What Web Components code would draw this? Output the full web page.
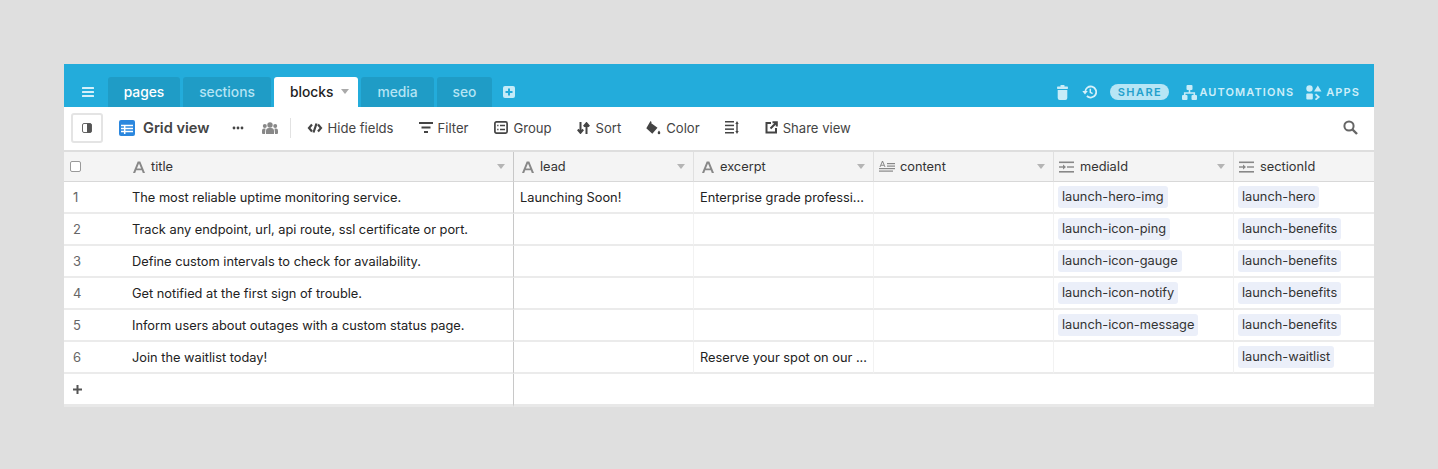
<!DOCTYPE html>
<html>
<head>
<meta charset="utf-8">
<title>blocks</title>
<style>
  html, body { margin: 0; height: 469px; overflow: hidden; background: #dfdfdf; }
  body { padding: 64px 64px 0; box-sizing: border-box; font-family: Inter, "Liberation Sans", sans-serif; color: #222; }
</style>
</head>
<body>
<base-app>
  <top-bar slot="top">
    <table-tab style="width:72px">pages</table-tab>
    <table-tab dim style="width:88px">sections</table-tab>
    <table-tab active style="width:84px">blocks</table-tab>
    <table-tab dim style="width:73px">media</table-tab>
    <table-tab dim style="width:55px">seo</table-tab>
  </top-bar>
  <view-bar slot="bar"></view-bar>
  <grid-table slot="grid"></grid-table>
</base-app>

<script>
// Outer frame
class BaseApp extends HTMLElement {
  constructor() {
    super();
    this.attachShadow({ mode: 'open' });
    this.shadowRoot.innerHTML = `
      <style>
        :host { display: flex; flex-direction: column; width: 1310px; height: 343px; background: #fff; overflow: hidden; }
      </style>
      <slot name="top"></slot>
      <slot name="bar"></slot>
      <slot name="grid"></slot>
    `;
  }
}
customElements.define('base-app', BaseApp);

class TableTab extends HTMLElement {
  constructor() {
    super();
    this.attachShadow({ mode: 'open' });
    this.shadowRoot.innerHTML = `
      <style>
        :host { display: flex; align-items: center; justify-content: center; box-sizing: border-box; height: 30px; padding: 0 0 1px; margin-right: 3px;
          background: #1f9cc6; border-radius: 3px 3px 0 0; color: #fff; font-size: 13.8px; font-weight: 500; }
        :host([dim]) { color: #b5e4f4; }
        :host([active]) { background: #fff; color: #222; justify-content: flex-start; padding-left: 16px; }
        svg { display: none; margin-left: 8px; }
        :host([active]) svg { display: block; }
      </style>
      <slot></slot>
      <svg width="8" height="5" viewBox="0 0 8 5"><path d="M0 0h8L4 5z" fill="#aaa"/></svg>
    `;
  }
}
customElements.define('table-tab', TableTab);

class TopBar extends HTMLElement {
  constructor() {
    super();
    this.attachShadow({ mode: 'open' });
    this.shadowRoot.innerHTML = `
      <style>
        :host { display: flex; align-items: flex-end; box-sizing: border-box; height: 43px; background: #23acdb; flex: none; color: #fff; }
        .menu { width: 44px; display: flex; justify-content: center; height: 30px; align-items: center; padding-left: 4px; box-sizing: border-box; }
        .tabs { display: flex; align-items: flex-end; }
        .add { height: 30px; display: flex; align-items: center; margin-left: 8px; }
        .right { margin-left: auto; height: 30px; display: flex; align-items: center; padding-right: 14px; box-sizing: border-box; }
        .caps { font-size: 11px; font-weight: 600; letter-spacing: 1.1px; color: #cdeef9; }
        .share { background: #b7e5f5; color: #23a0cc; border-radius: 8px; height: 16px; width: 59px; margin: 0 13px; display: flex; align-items: center; justify-content: center; font-size: 11px; font-weight: 600; letter-spacing: 1.45px; }
        .hist { margin-left: 14px; }
        .apps { margin: 0 4px 0 12px; }
        .auto { margin-right: 2px; }
      </style>
      <div class="menu">
        <svg width="12" height="10" viewBox="0 0 12 10" fill="#d5f0fa"><rect width="12" height="2" rx=".5"/><rect y="4" width="12" height="2" rx=".5"/><rect y="8" width="12" height="2" rx=".5"/></svg>
      </div>
      <div class="tabs"><slot></slot></div>
      <div class="add">
        <svg width="12" height="12" viewBox="0 0 12 12"><rect width="12" height="12" rx="2" fill="#c4ebf8"/><path d="M5 2.500h2V5h2.500v2H7v2.500H5V7H2.500V5H5z" fill="#23acdb"/></svg>
      </div>
      <div class="right">
        <svg width="11" height="15" viewBox="0 0 11 15" fill="#c8ecf8"><rect x="3.500" y="0" width="4" height="2" rx=".6"/><rect x="0" y="1.500" width="11" height="2.500" rx=".8"/><path d="M.7 5h9.600v8a2 2 0 0 1-2 2H2.700a2 2 0 0 1-2-2z"/></svg>
        <svg class="hist" width="15" height="14" viewBox="0 0 15 14" fill="none" stroke="#d5f0fa" stroke-width="1.800"><path d="M3.200 7a5.500 5.500 0 1 1 1.700 4"/><path d="M8.300 3.800V7.300L10.600 8.600" stroke-width="1.500"/><path d="M0.300 6h5.500L3 9.500z" fill="#d5f0fa" stroke="none"/></svg>
        <div class="share">SHARE</div>
        <svg class="auto" width="15" height="15" viewBox="0 0 15 15" fill="#c8ecf8"><rect x="4.500" y="0" width="6" height="5" rx="1"/><rect x="0" y="10" width="5.500" height="5" rx="1"/><rect x="9.500" y="10" width="5.500" height="5" rx="1"/><path d="M7.500 4v4M2.700 11V8h9.600v3" fill="none" stroke="#c8ecf8" stroke-width="1.600"/></svg>
        <span class="caps">AUTOMATIONS</span>
        <svg class="apps" width="16" height="15" viewBox="0 0 16 15" fill="#c8ecf8"><circle cx="3.500" cy="3.500" r="3.200"/><path d="M11.800 0.500 15.500 6.500H8z"/><rect x="0.300" y="8.500" width="6.500" height="6" rx="1"/><path d="M9.500 9.300l3.200 2.700-3.200 2.700" fill="none" stroke="#c8ecf8" stroke-width="1.800"/></svg>
        <span class="caps">APPS</span>
      </div>
    `;
  }
}
customElements.define('top-bar', TopBar);

class ToolBtn extends HTMLElement {
  constructor() {
    super();
    this.attachShadow({ mode: 'open' });
    this.shadowRoot.innerHTML = `
      <style>
        :host { display: flex; align-items: center; gap: 5px; font-size: 13.1px; color: #444; white-space: nowrap; }
      </style>
      <slot name="icon"></slot><slot></slot>
    `;
  }
}
customElements.define('tool-btn', ToolBtn);

class ViewBar extends HTMLElement {
  constructor() {
    super();
    this.attachShadow({ mode: 'open' });
    this.shadowRoot.innerHTML = `
      <style>
        :host { display: flex; align-items: center; box-sizing: border-box; height: 45px; flex: none; background: #fff; padding: 0 16px 2px 7px; border-bottom: 2px solid #dedede; }
        .toggle { box-sizing: border-box; width: 32px; height: 30px; border: 2px solid #e4e4e4; border-radius: 3px; display: flex; align-items: center; justify-content: center; }
        .view { display: flex; align-items: center; gap: 8px; margin-left: 16px; font-size: 14.6px; font-weight: 600; color: #444; }
        .dots { margin-left: 22px; }
        .people { margin-left: 18px; }
        .sep { width: 1px; height: 20px; background: #e2e2e2; margin: 0 16px 0 12px; }
        tool-btn { margin-right: 25px; }
        .search { margin-left: auto; }
      </style>
      <div class="toggle">
        <svg width="10" height="10" viewBox="0 0 10 10"><rect x=".5" y=".5" width="9" height="9" rx="1.500" fill="#fff" stroke="#666"/><path d="M5 0.500h3a1.500 1.500 0 0 1 1.500 1.500v6A1.500 1.500 0 0 1 8 9.500H5z" fill="#555"/></svg>
      </div>
      <div class="view">
        <svg width="16" height="16" viewBox="0 0 16 16"><rect width="16" height="16" rx="2" fill="#2b87de"/><path d="M2 5.500h12M2 8.500h12M2 11.500h12M5.700 5v9" stroke="#fff" stroke-width="1.500" fill="none"/></svg>
        <span>Grid view</span>
      </div>
      <svg class="dots" width="12" height="4" viewBox="0 0 12 4" fill="#444"><circle cx="2" cy="2" r="1.400"/><circle cx="6" cy="2" r="1.400"/><circle cx="10" cy="2" r="1.400"/></svg>
      <svg class="people" width="16" height="12" viewBox="0 0 16 12" fill="#888"><circle cx="8" cy="3" r="2.700"/><circle cx="2.800" cy="4" r="2"/><circle cx="13.200" cy="4" r="2"/><path d="M4 12V9a3 3 0 0 1 3-3h2a3 3 0 0 1 3 3v3z"/><path d="M0 10V8.500A2 2 0 0 1 2 6.500h1.500L3 12H1a1 1 0 0 1-1-1z"/><path d="M16 10V8.500a2 2 0 0 0-2-2h-1.500L13 12h2a1 1 0 0 0 1-1z"/></svg>
      <div class="sep"></div>
      <tool-btn><svg slot="icon" width="16" height="10" viewBox="0 0 16 10" fill="none" stroke="#444" stroke-width="2.200"><path d="M5 1.500 2 5l3 3.500M11 1.500 14 5l-3 3.500M9.500 .5 6.500 9.500"/></svg>Hide fields</tool-btn>
      <tool-btn><svg slot="icon" width="14" height="11" viewBox="0 0 14 11" fill="#444"><rect width="14" height="2"/><rect x="2.500" y="4.500" width="9" height="2"/><rect x="5" y="9" width="4" height="2"/></svg>Filter</tool-btn>
      <tool-btn><svg slot="icon" width="14" height="13" viewBox="0 0 14 13" fill="none" stroke="#444" stroke-width="1.700" style="margin-right:1px"><rect x=".9" y=".9" width="12.200" height="11.200" rx="1.500"/><path d="M3.200 4.500h1.300M6 4.500h5M3.200 8.500h1.300M6 8.500h5"/></svg>Group</tool-btn>
      <tool-btn><svg slot="icon" width="13" height="12" viewBox="0 0 13 12" fill="none" stroke="#444" stroke-width="2" style="margin-right:1px"><path d="M3.500 0v10M.8 7.500 3.500 10.800 6.200 7.500M9.500 12V2M6.800 4.500 9.500 1.200l2.700 3.300"/></svg>Sort</tool-btn>
      <tool-btn><svg slot="icon" width="15" height="14" viewBox="0 0 15 14" fill="#444"><path d="M4.500 0 5.800 1.200 5 2 11.500 6.800 6.300 12.800 .3 7.200z"/><path d="M13 9.500c.8 1 1.300 1.800 1.300 2.500a1.300 1.300 0 0 1-2.600 0c0-.7.500-1.500 1.300-2.500z"/></svg>Color</tool-btn>
      <svg width="14" height="13" viewBox="0 0 14 13" fill="#444" style="margin-right:26px"><rect y="0" width="9" height="1.500"/><rect y="3.700" width="9" height="1.500"/><rect y="7.400" width="9" height="1.500"/><rect y="11" width="9" height="1.500"/><path d="M11.300 1h1.400v11h-1.400zM10.300 3 12 0l1.700 3zM10.300 10h3.400L12 13z"/></svg>
      <tool-btn><svg slot="icon" width="13" height="13" viewBox="0 0 13 13" fill="none" stroke="#444" stroke-width="2"><path d="M6 2H1.500v9.500H11V7"/><path d="M5.500 7.500 11 2M7.500 1.200h4.300v4.300"/></svg>Share view</tool-btn>
      <svg class="search" width="15" height="15" viewBox="0 0 15 15" fill="none" stroke="#666" stroke-width="2"><circle cx="6" cy="6" r="4.600"/><path d="M9.500 9.500 14 14" stroke-width="2.400"/></svg>
    `;
  }
}
customElements.define('view-bar', ViewBar);

// Field type icons
const ICONS = {
  text: `<svg width="12" height="12" viewBox="0 0 12 12"><path d="M0 12 4.700 0.500h2.600L12 12H9.800L8.800 9.300H3.200L2.200 12zM3.900 7.400h4.200L6 2.600z" fill="#888"/></svg>`,
  long: `<svg width="16" height="12" viewBox="0 0 16 12" fill="#888"><path d="M0.500 6 3 0h1L6.500 6h-1L5 4.700H2L1.500 6zM2.400 3.800h2.200L3.500 1.200z"/><rect y="7" width="7" height="1"/><rect x="8" y="2" width="8" height="1.200"/><rect x="8" y="4.500" width="8" height="1.200"/><rect y="7" width="16" height="1.200"/><rect y="9.500" width="14" height="1.200"/></svg>`,
  link: `<svg width="15" height="12" viewBox="0 0 15 12" fill="#888"><rect width="15" height="1.600" y="0.500"/><rect width="15" height="1.600" y="10"/><rect width="4.500" height="1.400" y="5.300" x="0"/><rect width="7" height="1.400" y="5.300" x="8"/><path d="M4 3.500 7 6 4 8.500z"/></svg>`
};

class FieldHead extends HTMLElement {
  constructor() {
    super();
    this.attachShadow({ mode: 'open' });
    const hideArrow = this.hasAttribute('plain');
    this.shadowRoot.innerHTML = `
      <style>
        :host { display: flex; align-items: center; box-sizing: border-box; padding: 0 8px; gap: 6px; font-size: 12.8px; color: #333; background: #f4f4f4;
          border-right: 1px solid #e0e0e0; border-bottom: 1px solid #d8d8d8; }
        .name { flex: 1; }
        :host([frozen]) { border-right: 1px solid #c8c8c8; padding-left: 1px; }
        :host([icon="long"]) { padding-left: 5px; gap: 5px; }
        :host([icon="link"]) { padding-left: 5px; }
        :host([plain]) { border-right: 0; }
      </style>
      ${ICONS[this.getAttribute('icon')]}
      <span class="name"><slot></slot></span>
      ${hideArrow ? '' : '<svg width="8" height="5" viewBox="0 0 8 5"><path d="M0 0h8L4 5z" fill="#b5b5b5"/></svg>'}
    `;
  }
}
customElements.define('field-head', FieldHead);

class LinkChip extends HTMLElement {
  constructor() {
    super();
    this.attachShadow({ mode: 'open' });
    this.shadowRoot.innerHTML = `
      <style>
        :host { display: inline-flex; align-items: center; box-sizing: border-box; height: 22px; padding: 0 4px 1px; background: #ebeff9; border-radius: 3px; font-size: 12.8px; color: #333; white-space: nowrap; }
      </style>
      <slot></slot>
    `;
  }
}
customElements.define('link-chip', LinkChip);

const ROWS = [
  ['The most reliable uptime monitoring service.', 'Launching Soon!', 'Enterprise grade professi...', 'launch-hero-img', 'launch-hero'],
  ['Track any endpoint, url, api route, ssl certificate or port.', '', '', 'launch-icon-ping', 'launch-benefits'],
  ['Define custom intervals to check for availability.', '', '', 'launch-icon-gauge', 'launch-benefits'],
  ['Get notified at the first sign of trouble.', '', '', 'launch-icon-notify', 'launch-benefits'],
  ['Inform users about outages with a custom status page.', '', '', 'launch-icon-message', 'launch-benefits'],
  ['Join the waitlist today!', '', 'Reserve your spot on our ...', '', 'launch-waitlist']
];

class GridTable extends HTMLElement {
  constructor() {
    super();
    this.attachShadow({ mode: 'open' });
    const body = ROWS.map((r, i) => `
      <div class="c num">${i + 1}</div>
      <div class="c title">${r[0]}</div>
      <div class="c">${r[1]}</div>
      <div class="c">${r[2]}</div>
      <div class="c"></div>
      <div class="c chip">${r[3] ? `<link-chip>${r[3]}</link-chip>` : ''}</div>
      <div class="c chip last">${r[4] ? `<link-chip>${r[4]}</link-chip>` : ''}</div>
    `).join('');
    this.shadowRoot.innerHTML = `
      <style>
        :host { display: grid; flex: none; grid-template-columns: 68px 382px 180px 180px 180px 180px 140px;
          grid-template-rows: 30px repeat(6, 32px) 33px; height: 255px; font-size: 12.8px; color: #222; }
        .corner { display: flex; align-items: center; padding-left: 6px; background: #f4f4f4; border-bottom: 1px solid #d8d8d8; }
        .box { width: 11px; height: 11px; box-sizing: border-box; border: 1px solid #999; border-radius: 2px; background: #fff; }
        .c { display: flex; align-items: center; box-sizing: border-box; padding: 0 6px; white-space: nowrap; overflow: hidden;
          border-bottom: 2px solid #ebebeb; border-right: 1px solid #f2f2f2; }
        .num { padding-left: 9px; color: #666; font-size: 13px; border-right: 0; }
        .title { border-right: 1px solid #c8c8c8; padding-left: 0; }
        .chip { padding: 4px 0 0 4px; align-items: flex-start; }
        .last { border-right: 0; }
        .add { grid-column: 1 / 3; display: flex; align-items: center; padding-left: 9px; border-right: 1px solid #c8c8c8; border-bottom: 3px solid #e8e8e8; box-sizing: border-box; }
        .rest { grid-column: 3 / 8; border-bottom: 3px solid #e8e8e8; }
      </style>
      <div class="corner"><div class="box"></div></div>
      <field-head icon="text" frozen>title</field-head>
      <field-head icon="text">lead</field-head>
      <field-head icon="text">excerpt</field-head>
      <field-head icon="long">content</field-head>
      <field-head icon="link">mediaId</field-head>
      <field-head icon="link" plain>sectionId</field-head>
      ${body}
      <div class="add"><svg width="9" height="9" viewBox="0 0 9 9" fill="#555"><path d="M3.500 0h2v3.500H9v2H5.500V9h-2V5.500H0v-2h3.500z"/></svg></div>
      <div class="rest"></div>
    `;
  }
}
customElements.define('grid-table', GridTable);
</script>
</body>
</html>
